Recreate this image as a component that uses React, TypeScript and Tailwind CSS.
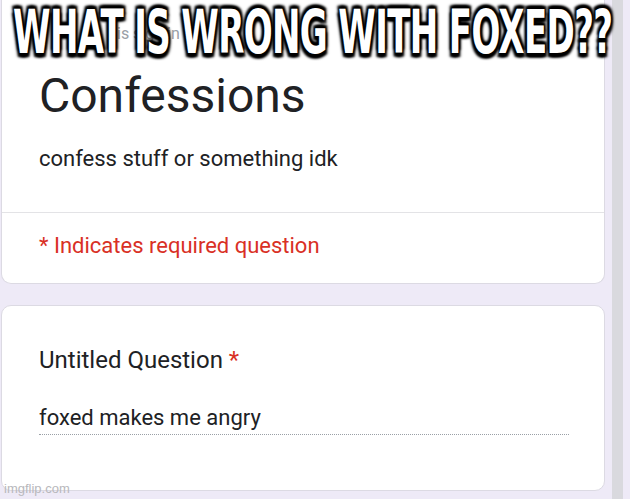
const roboto = { fontFamily: 'Roboto, "Noto Sans", sans-serif' }

export default function App() {
  return (
    <div
      className="relative flex h-[499px] w-[630px] overflow-hidden bg-[#eeeaf7] text-[#202124]"
      style={roboto}
    >
      <div className="ml-[1px] flex w-[604px] flex-col">
        {/* header card */}
        <div className="rounded-b-[10px] border border-t-0 border-[#dcdae3] bg-white">
          <div className="border-b border-[#e3e3e6] px-[37px] pb-[39px] pt-[24px]">
            <p className="pl-[78px] text-[16px] leading-[20px] text-[#9aa0a6]">
              is sign in
            </p>
            <h1 className="mt-[24px] text-[48px] leading-[56px] font-normal">
              Confessions
            </h1>
            <p className="mt-[21px] text-[22px] leading-[28px]">
              confess stuff or something idk
            </p>
          </div>
          <div className="px-[37px] pb-[23px] pt-[19px]">
            <p className="text-[22px] leading-[28px] text-[#d93025]">
              * Indicates required question
            </p>
          </div>
        </div>

        {/* question card */}
        <div className="mt-[21px] rounded-[10px] border border-[#dcdae3] bg-white px-[37px] pb-[55px] pt-[38px]">
          <p className="text-[24px] leading-[32px]">
            Untitled Question <span className="text-[#d93025]">*</span>
          </p>
          <div className="mt-[28px] w-[530px] border-b border-dotted border-[#9aa0a6] pb-[2px]">
            <p className="text-[22px] leading-[28px]">foxed makes me angry</p>
          </div>
        </div>
      </div>

      <div className="ml-[7px] h-full w-[11px] bg-[#d9d9de]" />

      {/* meme caption, stretched tall like Impact */}
      <div className="absolute left-[13px] top-[1px]">
        <div
          className="inline-block origin-top-left scale-y-[1.587] text-[37.8px] leading-[40.3px] font-bold uppercase text-white [text-shadow:0_0_1px_#000,0_0_2px_#000,2px_2px_2px_#000,-2px_-2px_2px_#000,2px_-2px_2px_#000,-2px_2px_2px_#000,0_2px_2px_#000,0_-2px_2px_#000] tracking-[-0.63px] whitespace-nowrap"
          style={{ fontFamily: '"Liberation Sans Narrow", "DejaVu Sans Condensed", "Liberation Sans", sans-serif' }}
        >
          WHAT IS WRONG WITH FOXED??
        </div>
      </div>

      <span
        className="absolute bottom-[2px] left-[4px] text-[13px] leading-[16px] text-[#b8b8bc]"
        style={{ fontFamily: '"Liberation Sans", sans-serif' }}
      >
        imgflip.com
      </span>
    </div>
  )
}
